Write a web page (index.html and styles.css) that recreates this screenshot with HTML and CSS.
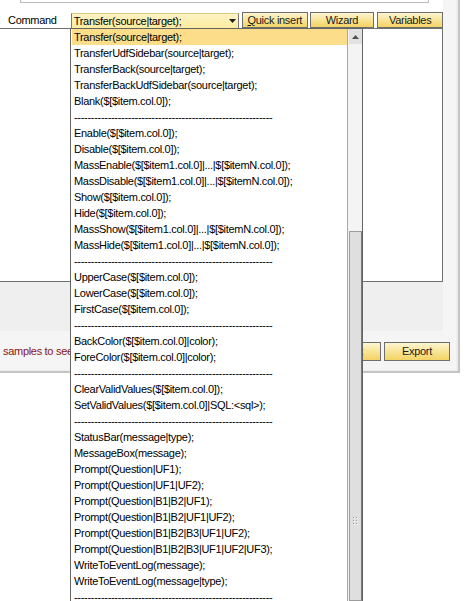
FILE: index.html
```html
<!DOCTYPE html>
<html>
<head>
<meta charset="utf-8">
<link rel="stylesheet" href="styles.css">
</head>
<body>
<div class="frame">
  <div class="panel">
    <div class="main">
      <div class="header">
        <div class="topbox"></div>
        <div class="cmdrow">
          <span class="label">Command</span>
          <div class="combo">
            <span class="combo-text">Transfer(source|target);</span>
            <svg class="combo-arrow" width="7" height="4" viewBox="0 0 7 4"><polygon points="0,0 7,0 3.5,4" fill="#1e1e1e"/></svg>
          </div>
          <button class="btn btn-quick"><u>Q</u>uick insert</button>
          <button class="btn btn-wizard">Wizard</button>
          <button class="btn btn-vars">Variables</button>
        </div>
      </div>
      <div class="editor"></div>
      <div class="graybox"></div>
    </div>
    <div class="footer">
      <span class="hint">samples to see more examples</span>
      <div class="footer-btns">
        <button class="btn btn-big btn-import">Import</button>
        <button class="btn btn-big">Export</button>
      </div>
    </div>
  </div>
</div>

<div class="dropdown">
  <ul class="items">
    <li class="sel">Transfer(source|target);</li>
    <li>TransferUdfSidebar(source|target);</li>
    <li>TransferBack(source|target);</li>
    <li>TransferBackUdfSidebar(source|target);</li>
    <li>Blank($[$item.col.0]);</li>
    <li class="sep">-----------------------------------------------------------</li>
    <li>Enable($[$item.col.0]);</li>
    <li>Disable($[$item.col.0]);</li>
    <li>MassEnable($[$item1.col.0]|...|$[$itemN.col.0]);</li>
    <li>MassDisable($[$item1.col.0]|...|$[$itemN.col.0]);</li>
    <li>Show($[$item.col.0]);</li>
    <li>Hide($[$item.col.0]);</li>
    <li>MassShow($[$item1.col.0]|...|$[$itemN.col.0]);</li>
    <li>MassHide($[$item1.col.0]|...|$[$itemN.col.0]);</li>
    <li class="sep">-----------------------------------------------------------</li>
    <li>UpperCase($[$item.col.0]);</li>
    <li>LowerCase($[$item.col.0]);</li>
    <li>FirstCase($[$item.col.0]);</li>
    <li class="sep">-----------------------------------------------------------</li>
    <li>BackColor($[$item.col.0]|color);</li>
    <li>ForeColor($[$item.col.0]|color);</li>
    <li class="sep">-----------------------------------------------------------</li>
    <li>ClearValidValues($[$item.col.0]);</li>
    <li>SetValidValues($[$item.col.0]|SQL:&lt;sql&gt;);</li>
    <li class="sep">-----------------------------------------------------------</li>
    <li>StatusBar(message|type);</li>
    <li>MessageBox(message);</li>
    <li>Prompt(Question|UF1);</li>
    <li>Prompt(Question|UF1|UF2);</li>
    <li>Prompt(Question|B1|B2|UF1);</li>
    <li>Prompt(Question|B1|B2|UF1|UF2);</li>
    <li>Prompt(Question|B1|B2|B3|UF1|UF2);</li>
    <li>Prompt(Question|B1|B2|B3|UF1|UF2|UF3);</li>
    <li>WriteToEventLog(message);</li>
    <li>WriteToEventLog(message|type);</li>
    <li class="sep">-----------------------------------------------------------</li>
  </ul>
  <div class="vscroll">
    <div class="up">
      <svg width="7" height="4" viewBox="0 0 7 4"><polygon points="0,4 7,4 3.5,0" fill="#505050"/></svg>
    </div>
    <div class="track"></div>
    <div class="thumb">
      <svg class="grip" width="6" height="8" viewBox="0 0 6 8">
        <rect x="1" y="1" width="1" height="1" fill="#fff"/><rect x="4" y="1" width="1" height="1" fill="#fff"/>
        <rect x="1" y="4" width="1" height="1" fill="#fff"/><rect x="4" y="4" width="1" height="1" fill="#fff"/>
        <rect x="1" y="7" width="1" height="1" fill="#fff"/><rect x="4" y="7" width="1" height="1" fill="#fff"/>
        <rect x="0" y="0" width="1" height="1" fill="#9a9a9a"/><rect x="3" y="0" width="1" height="1" fill="#9a9a9a"/>
        <rect x="0" y="3" width="1" height="1" fill="#9a9a9a"/><rect x="3" y="3" width="1" height="1" fill="#9a9a9a"/>
        <rect x="0" y="6" width="1" height="1" fill="#9a9a9a"/><rect x="3" y="6" width="1" height="1" fill="#9a9a9a"/>
      </svg>
    </div>
  </div>
</div>
</body>
</html>
```

FILE: styles.css
```css
* { box-sizing: border-box; }

html, body {
  margin: 0;
  padding: 0;
}

body {
  width: 470px;
  height: 601px;
  overflow: hidden;
  position: relative;
  background: #ffffff;
  font-family: "Liberation Sans", Arial, sans-serif;
  font-size: 11px;
  letter-spacing: -0.3px;
  color: #000000;
}

.frame {
  width: 460px;
  padding: 0 2px 1px 0;
  background: #ececec;
  border-right: 2px solid #c4c4c4;
  border-bottom: 2px solid #c4c4c4;
}

.panel {
  width: 456px;
  height: 370px;
  background: #f5f5f5;
}

.main {
  width: 443px;
  height: 331px;
  display: flex;
  flex-direction: column;
}

.header {
  height: 28px;
  background: #ffffff;
}

.topbox {
  margin-left: 20px;
  width: 409px;
  height: 3px;
  border: 1px solid #b9b9b9;
  border-top: none;
}

.cmdrow {
  display: flex;
  align-items: flex-start;
  margin-top: 9px;
  height: 16px;
}

.label {
  width: 71px;
  padding-left: 8px;
  line-height: 16px;
}

.combo {
  width: 169px;
  height: 15px;
  margin-top: 1px;
  display: flex;
  align-items: center;
  justify-content: space-between;
  padding: 0 2px 0 2px;
  background: linear-gradient(#fdf3c4, #fcec9f);
  border: 1px solid #7a7a7a;
  border-top-color: #d8c98a;
  border-bottom: none;
  line-height: 14px;
}

.combo-arrow {
  display: block;
}

.btn {
  height: 16px;
  padding: 0;
  margin: 0;
  border: 1px solid #6e6e6e;
  background: linear-gradient(#fdf5d2, #f9e69c 45%, #f3d363);
  font: inherit;
  letter-spacing: inherit;
  color: #1a1a1a;
  line-height: 14px;
  text-align: center;
}

.btn-quick { width: 66px; margin-left: 3px; }
.btn-wizard { width: 65px; margin-left: 2px; }
.btn-vars { width: 66px; margin-left: 3px; }

.editor {
  height: 254px;
  background: #ffffff;
  border: 1px solid #707070;
  border-left: none;
}

.graybox {
  flex: 1;
  background: #efefef;
}

.footer {
  height: 39px;
  display: flex;
  justify-content: space-between;
  align-items: flex-start;
  padding: 11px 6px 0 3px;
}

.hint {
  display: block;
  width: 67px;
  overflow: hidden;
  color: #8b1414;
  line-height: 19px;
  white-space: nowrap;
}

.footer-btns {
  display: flex;
  gap: 3px;
}

.btn-big {
  width: 66px;
  height: 19px;
  line-height: 17px;
}

.btn-import {
  text-align: right;
  padding-right: 17px;
}

.dropdown {
  position: absolute;
  left: 70px;
  top: 28px;
  width: 293px;
  height: 573px;
  background: #ffffff;
  border: 1px solid #646464;
  border-bottom: none;
  display: flex;
}

.items {
  flex: 1;
  list-style: none;
  margin: 0;
  padding: 0 0 0 1px;
}

.items li {
  height: 16px;
  line-height: 16px;
  padding-left: 2px;
  white-space: nowrap;
  overflow: hidden;
}

.items li.sel {
  background: #fcdd8a;
}

.vscroll {
  width: 15px;
  border-left: 1px solid #a8a8a8;
  padding-left: 1px;
  background: #f4f4f4;
  display: flex;
  flex-direction: column;
}

.up {
  height: 15px;
  background: #e1e1e1;
  display: flex;
  align-items: center;
  justify-content: center;
}

.track {
  height: 187px;
}

.thumb {
  flex: 1;
  background: #dfdfdf;
  border: 1px solid #9c9c9c;
  border-right-color: #7a7a7a;
  display: flex;
  flex-direction: column;
  align-items: center;
}

.grip {
  display: block;
  margin-top: 285px;
}
```
